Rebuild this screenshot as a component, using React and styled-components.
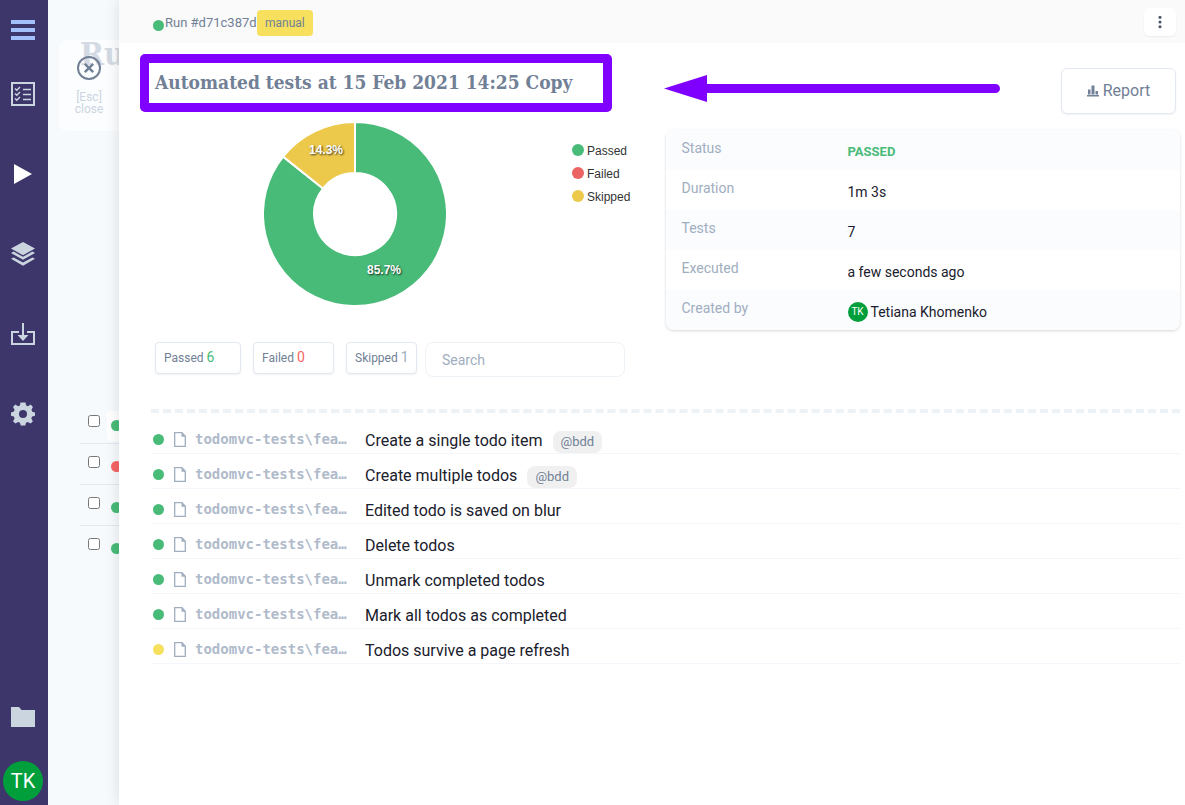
import React from 'react';
import styled, { createGlobalStyle } from 'styled-components';

const colors = {
  green: '#48bb78',
  red: '#f56565',
  yellow: '#f6e05e',
  gold: '#ecc94b',
  slate: '#718096',
  mist: '#a0aec0',
  line: '#edf2f7',
  ink: '#1a202c',
  accent: '#8000ff',
};

const GlobalStyle = createGlobalStyle`
  *, *::before, *::after { box-sizing: border-box; }
  body {
    margin: 0;
    font-family: Roboto, "Liberation Sans", sans-serif;
    font-size: 14px;
    line-height: 20px;
    color: ${colors.ink};
    background: #f7fafc;
  }
  button, input { font: inherit; color: inherit; }
  button { padding: 0; border: 0; background: none; cursor: pointer; }
  h1, h2, dl, dd, ul { margin: 0; padding: 0; }
  ul { list-style: none; }
  svg { display: block; }
`;

const Layout = styled.div`
  display: flex;
  min-height: 100vh;
`;

const Sidebar = styled.aside`
  display: flex;
  flex-direction: column;
  flex: none;
  width: 48px;
  padding-bottom: 4px;
  background: #3c366b;
`;

const NavLink = styled.a`
  display: flex;
  align-items: center;
  justify-content: center;
  height: ${(p) => p.$height || 80}px;
  padding-right: 2px;
  color: ${(p) => p.$color || '#cbd5e0'};
  text-decoration: none;
`;

const MenuButton = styled.button`
  display: flex;
  align-items: center;
  justify-content: center;
  height: 54px;
  padding: 6px 2px 0 0;
  color: #a3bffa;
`;

const Spacer = styled.div`
  flex: 1;
`;

const Avatar = styled.span`
  display: inline-flex;
  align-items: center;
  justify-content: center;
  flex: none;
  width: ${(p) => p.$size}px;
  height: ${(p) => p.$size}px;
  border-radius: 50%;
  background: #009f3c;
  color: #fff;
  font-size: ${(p) => p.$size / 2}px;
`;

const Backdrop = styled.section`
  position: relative;
  flex: none;
  width: 71px;
  overflow: hidden;
  background: #f7fafc;
`;

const BackTitle = styled.h2`
  height: 403px;
  padding: 30px 0 0 32px;
  font: 700 32px/48px "DejaVu Serif Condensed", "DejaVu Serif", serif;
  color: ${colors.mist};
`;

const BackRow = styled.li`
  display: flex;
  height: 41px;
  margin-left: 32px;
  border-bottom: 1px solid ${(p) => (p.$last ? 'transparent' : '#e2e8f0')};
`;

const BackCheck = styled.input`
  width: 12px;
  height: 12px;
  margin: 12px 7px 0 8px;
`;

const BackStatus = styled.span`
  flex: none;
  width: 30px;
  height: 30px;
  margin-top: 8px;
  padding: 9px 0 0 4px;
  border-radius: 4px;
  background: ${(p) => (p.$active ? '#fff' : 'transparent')};
`;

const CloseButton = styled.button`
  position: absolute;
  top: 40px;
  left: 11px;
  display: flex;
  flex-direction: column;
  align-items: center;
  width: 60px;
  height: 91px;
  padding-top: 16px;
  border-radius: 8px 0 0 8px;
  background: rgba(255, 255, 255, 0.55);
  font-size: 12px;
  line-height: 12px;
  color: #cbd5e0;
  svg { margin-bottom: 11px; color: ${colors.slate}; }
`;

const Panel = styled.main`
  position: relative;
  flex: 1;
  min-width: 0;
  background: #fff;
  box-shadow: 0 0 14px rgba(0, 0, 0, 0.12);
`;

const TopBar = styled.header`
  display: flex;
  align-items: center;
  height: 43px;
  padding: 2px 9px 0 34px;
  background: #fafafa;
  color: ${colors.slate};
`;

const Dot = styled.span`
  display: block;
  flex: none;
  width: ${(p) => p.$size || 11}px;
  height: ${(p) => p.$size || 11}px;
  border-radius: 50%;
  background: ${(p) => p.$color};
`;

const RunName = styled.span`
  display: flex;
  align-items: center;
  gap: 1px;
  width: 104px;
  font-size: 13px;
  white-space: nowrap;
  ${Dot} { margin-top: 6px; }
`;

const Badge = styled.span`
  padding: 3px 8px;
  border-radius: 4px;
  background: ${colors.yellow};
  font-size: 12px;
`;

const KebabButton = styled.button`
  display: flex;
  align-items: center;
  justify-content: center;
  width: 32px;
  height: 28px;
  margin: 0 0 2px auto;
  border-radius: 6px;
  background: #fff;
  box-shadow: 0 1px 2px rgba(0, 0, 0, 0.06);
  color: #4a5568;
`;

const TitleRow = styled.div`
  display: flex;
  align-items: flex-start;
  padding: 11px 9px 0 21px;
`;

const TitleFrame = styled.div`
  flex: none;
  width: 472px;
  height: 58px;
  padding: 3px 0 0 6px;
  border: 9px solid ${colors.accent};
  border-radius: 5px;
  white-space: nowrap;
`;

const Title = styled.h1`
  font: 700 19px/32px "DejaVu Serif Condensed", "DejaVu Serif", serif;
  color: ${colors.slate};
`;

const Arrow = styled.svg`
  flex: none;
  margin: 21px auto 0 52px;
`;

const ReportButton = styled.button`
  display: flex;
  align-items: center;
  justify-content: center;
  gap: 4px;
  flex: none;
  width: 115px;
  height: 46px;
  margin-top: 14px;
  border: 1px solid #e2e8f0;
  border-radius: 6px;
  background: #fff;
  box-shadow: 0 1px 2px rgba(0, 0, 0, 0.06);
  font-size: 16px;
  color: ${colors.slate};
`;

const Overview = styled.div`
  display: grid;
  grid-template-columns: 1fr 1fr;
  padding: 8px 5px 0 32px;
`;

const ChartArea = styled.div`
  display: flex;
  padding: 0 0 0 113px;
`;

const Legend = styled.ul`
  display: flex;
  flex-direction: column;
  gap: 3px;
  margin: 19px 0 0 126px;
  font-family: "Liberation Sans", sans-serif;
  font-size: 12px;
  color: #333;
`;

const LegendItem = styled.li`
  display: flex;
  align-items: center;
  gap: 3px;
  ${Dot} { margin-bottom: 2px; }
`;

const Summary = styled.dl`
  align-self: start;
  margin-top: 8px;
  border-radius: 8px;
  overflow: hidden;
  box-shadow: 0 1px 3px rgba(0, 0, 0, 0.16);
`;

const SummaryRow = styled.div`
  display: grid;
  grid-template-columns: 166px 1fr;
  height: 40px;
  padding: 8px 16px;
  background: #fff;
  &:nth-child(odd) { background: #fbfcfe; }
  dt { color: ${colors.mist}; }
  dd { display: flex; align-items: center; gap: 3px; height: 28px; }
`;

const Passed = styled.strong`
  font-size: 13px;
  font-weight: 700;
  color: ${colors.green};
`;

const Filters = styled.div`
  display: flex;
  align-items: flex-start;
  padding: 12px 9px 32px 36px;
`;

const FilterButton = styled.button`
  width: ${(p) => p.$width}px;
  height: 32px;
  margin-right: ${(p) => p.$gap || 12}px;
  padding: 0 8px 2px;
  border: 1px solid #e2e8f0;
  border-radius: 4px;
  background: #fff;
  box-shadow: 0 1px 2px rgba(0, 0, 0, 0.06);
  font-size: 12px;
  text-align: left;
  white-space: nowrap;
  color: ${colors.slate};
`;

const Count = styled.span`
  font-size: 14px;
  color: ${(p) => p.$color};
`;

const Search = styled.input`
  width: 200px;
  height: 35px;
  padding: 0 16px;
  border: 1px solid ${colors.line};
  border-radius: 8px;
  background: #fff;
  &::placeholder { color: ${colors.mist}; opacity: 1; }
`;

const TestList = styled.ul`
  margin: 0 5px 0 32px;
  padding-top: 6px;
  border-top: 4px dashed ${colors.line};
`;

const TestRow = styled.li`
  display: flex;
  align-items: center;
  height: 35px;
  padding: 6px 0 0 2px;
  border-bottom: 1px solid #f3f6fa;
  svg { margin: 1px 9px 0 10px; color: ${colors.mist}; }
`;

const FilePath = styled.span`
  flex: none;
  width: 154px;
  margin-right: 16px;
  font: 700 14px/20px "DejaVu Sans Mono", monospace;
  color: #afbaca;
`;

const TestLink = styled.a`
  padding-top: 3px;
  font-size: 16px;
  color: ${colors.ink};
  text-decoration: none;
`;

const Tag = styled.span`
  height: 22px;
  margin: 5px 0 0 10px;
  padding: 0 8px;
  border-radius: 8px;
  background: #f0f0f1;
  font-size: 13px;
  line-height: 22px;
  color: ${colors.slate};
`;

const Icon = ({ size = 24, children, ...rest }) => (
  <svg width={size} height={size} viewBox="0 0 24 24" fill="currentColor" aria-hidden="true" {...rest}>
    {children}
  </svg>
);

const GearIcon = () => (
  <Icon>
    <path
      fillRule="evenodd"
      d="M9.5 0.5h5l.7 3 1.8.8 2.7-1.7 2.2 2.3-1.4 2.9.7 1.9 2.8.8v3.2l-2.9.9-.8 1.8 1.6 2.8-2.3 2.2-2.9-1.5-1.8.8-.6 2.8h-4.6l-.7-2.8-1.9-.8-2.8 1.5-2.3-2.2 1.6-2.8-.8-1.8-2.8-.9v-3.2l2.9-.9.7-1.8-1.6-2.9 2.3-2.3 2.8 1.7 1.8-.8zM12 8a4 4 0 1 0 0 8 4 4 0 0 0 0-8z"
    />
  </Icon>
);

const FileIcon = () => (
  <svg width="12" height="15" viewBox="0 0 12 15" fill="none" stroke="currentColor" strokeWidth="1.3" aria-hidden="true">
    <path d="M.7.7H8l3.3 3.6v10H.7z" />
    <path d="M7.5.7v4h4z" fill="currentColor" stroke="none" />
  </svg>
);

const Donut = () => (
  <svg width="182" height="184" viewBox="-91 -92 182 184" role="img" aria-label="Passed 85.7%, skipped 14.3%">
    <g stroke="#fff" strokeWidth="2">
      <path fill="#48bb78" d="M0-92A92 92 0 1 1-71.9-57.4L-32-25.5A41 41 0 1 0 0-41z" />
      <path fill={colors.gold} d="M-71.9-57.4A92 92 0 0 1 0-92V-41A41 41 0 0 0-32-25.5z" />
    </g>
    <g
      fill="#fff"
      fontFamily="Liberation Sans, sans-serif"
      fontSize="12"
      fontWeight="700"
      textAnchor="middle"
      style={{ textShadow: '1px 1px 2px rgba(0,0,0,.75)' }}
    >
      <text x="-29" y="-60">14.3%</text>
      <text x="29" y="60">85.7%</text>
    </g>
  </svg>
);

const tests = [
  { name: 'Create a single todo item', tag: '@bdd' },
  { name: 'Create multiple todos', tag: '@bdd' },
  { name: 'Edited todo is saved on blur' },
  { name: 'Delete todos' },
  { name: 'Unmark completed todos' },
  { name: 'Mark all todos as completed' },
  { name: 'Todos survive a page refresh', skipped: true },
];

const legend = [
  ['Passed', colors.green],
  ['Failed', '#eb6363'],
  ['Skipped', colors.gold],
];

const summary = [
  ['Status', <Passed key="s">PASSED</Passed>],
  ['Duration', '1m 3s'],
  ['Tests', '7'],
  ['Executed', 'a few seconds ago'],
  ['Created by', <React.Fragment key="c"><Avatar $size={20}>TK</Avatar>Tetiana Khomenko</React.Fragment>],
];

const otherRuns = [colors.green, colors.red, colors.green, colors.green];

export default function App() {
  return (
    <Layout>
      <GlobalStyle />
      <Sidebar>
        <MenuButton aria-label="Menu">
          <Icon><path d="M0 2h24v4H0zM0 10h24v4H0zM0 18h24v4H0z" /></Icon>
        </MenuButton>
        <nav aria-label="Project">
          <NavLink href="#tests" aria-label="Tests">
            <Icon fill="none" stroke="currentColor">
              <path strokeWidth="2" d="M1 1h22v22H1z" />
              <path strokeWidth="1.3" d="M12 7.5h8M12 12.5h8M12 17.5h8" />
              <path strokeWidth="1.4" d="M4 6.5l1.8 1.8L9 5M4 11.5l1.8 1.8L9 10M4 16.5l1.8 1.8L9 15" />
            </Icon>
          </NavLink>
          <NavLink href="#runs" aria-label="Runs" $color="#fff">
            <Icon><path d="M3 2l18 10L3 22z" /></Icon>
          </NavLink>
          <NavLink href="#plans" aria-label="Plans">
            <Icon>
              <path d="M12 0l12 6.6-12 6.6L0 6.6z" />
              <path d="M0 11l2.6-1.4L12 14.8l9.4-5.2L24 11l-12 6.8z" />
              <path d="M0 16.8l2.6-1.4L12 20.6l9.4-5.2 2.6 1.4-12 7z" />
            </Icon>
          </NavLink>
          <NavLink href="#import" aria-label="Import">
            <Icon>
              <path d="M0 9h8v2H2v10h20V11h-6V9h8v14H0z" />
              <path d="M11 1h2v12h4.5L12 19l-5.5-6H11z" />
            </Icon>
          </NavLink>
          <NavLink href="#settings" aria-label="Settings"><GearIcon /></NavLink>
        </nav>
        <Spacer />
        <NavLink href="#projects" aria-label="Projects" $height={88}>
          <Icon><path d="M0 2h8l2.5 3H24v17H0z" /></Icon>
        </NavLink>
        <NavLink href="#profile" aria-label="Profile" $height={40}><Avatar $size={40}>TK</Avatar></NavLink>
      </Sidebar>

      <Backdrop>
        <BackTitle>Runs</BackTitle>
        <ul>
          {otherRuns.map((color, i) => (
            <BackRow key={i} $last={i === otherRuns.length - 1}>
              <BackCheck type="checkbox" aria-label={`Select run ${i + 1}`} />
              <BackStatus $active={i === 0}><Dot $color={color} /></BackStatus>
            </BackRow>
          ))}
        </ul>
        <CloseButton>
          <Icon fill="none" stroke="currentColor">
            <circle cx="12" cy="12" r="11" strokeWidth="2" />
            <path strokeWidth="2.4" d="M7.8 7.8l8.4 8.4M16.2 7.8l-8.4 8.4" />
          </Icon>
          <span>[Esc]</span>
          <span>close</span>
        </CloseButton>
      </Backdrop>

      <Panel>
        <TopBar>
          <RunName><Dot $color={colors.green} />Run #d71c387d</RunName>
          <Badge>manual</Badge>
          <KebabButton aria-label="More actions">
            <Icon size={16}>
              <circle cx="12" cy="5" r="2.3" />
              <circle cx="12" cy="12" r="2.3" />
              <circle cx="12" cy="19" r="2.3" />
            </Icon>
          </KebabButton>
        </TopBar>

        <TitleRow>
          <TitleFrame><Title>Automated tests at 15 Feb 2021 14:25 Copy</Title></TitleFrame>
          <Arrow width="336" height="27" viewBox="0 0 336 27" fill={colors.accent} aria-hidden="true">
            <path d="M0 13.5L43 0v9h288.5a4.5 4.5 0 0 1 0 9H43v9z" />
          </Arrow>
          <ReportButton>
            <Icon size={12}><path d="M0 20h24v3H0zM2 9h5v10H2zM9 1h6v18H9zM17 12h5v7h-5z" /></Icon>
            Report
          </ReportButton>
        </TitleRow>

        <Overview>
          <ChartArea>
            <Donut />
            <Legend>
              {legend.map(([name, color]) => (
                <LegendItem key={name}><Dot $size={12} $color={color} />{name}</LegendItem>
              ))}
            </Legend>
          </ChartArea>
          <Summary>
            {summary.map(([label, value]) => (
              <SummaryRow key={label}><dt>{label}</dt><dd>{value}</dd></SummaryRow>
            ))}
          </Summary>
        </Overview>

        <Filters>
          <FilterButton $width={86}>Passed <Count $color={colors.green}>6</Count></FilterButton>
          <FilterButton $width={81}>Failed <Count $color={colors.red}>0</Count></FilterButton>
          <FilterButton $width={71} $gap={8}>Skipped <Count $color={colors.mist}>1</Count></FilterButton>
          <Search type="search" placeholder="Search" aria-label="Search tests" />
        </Filters>

        <TestList>
          {tests.map((test) => (
            <TestRow key={test.name}>
              <Dot $color={test.skipped ? colors.yellow : colors.green} />
              <FileIcon />
              <FilePath>todomvc-tests\fea…</FilePath>
              <TestLink href="#test">{test.name}</TestLink>
              {test.tag && <Tag>{test.tag}</Tag>}
            </TestRow>
          ))}
        </TestList>
      </Panel>
    </Layout>
  );
}
